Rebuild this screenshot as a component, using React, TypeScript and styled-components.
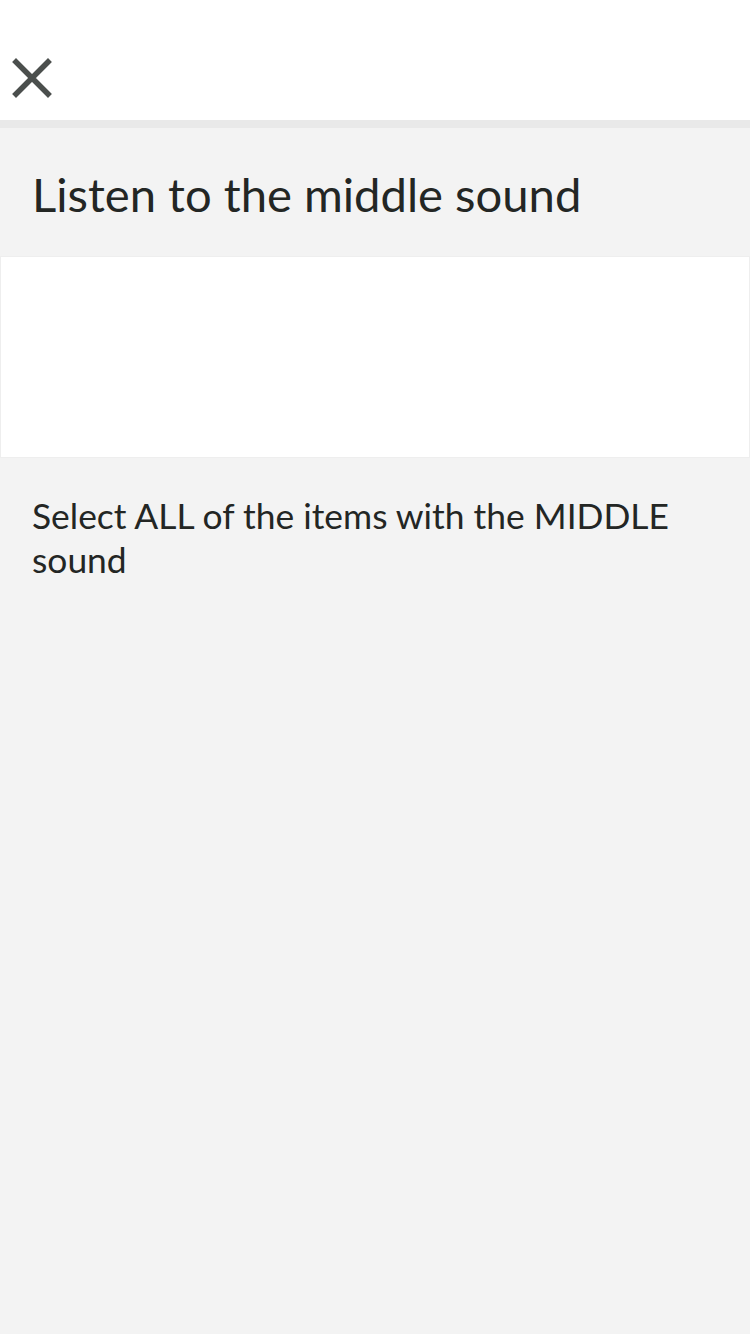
import styled, { createGlobalStyle } from "styled-components";

const GlobalStyle = createGlobalStyle`
  html, body {
    margin: 0;
    padding: 0;
    background: #f3f3f3;
  }
  body {
    font-family: Lato, "Open Sans", sans-serif;
    color: #232624;
  }
`;

const Page = styled.div`
  min-height: 1334px;
  background: #f3f3f3;
  display: flex;
  flex-direction: column;
`;

const Header = styled.header`
  height: 128px;
  box-sizing: border-box;
  background: #ffffff;
  border-bottom: 8px solid #e9e9e9;
  display: flex;
  align-items: flex-end;
  padding: 0 0 22px 12px;
`;

const CloseButton = styled.button`
  width: 40px;
  height: 40px;
  padding: 0;
  border: none;
  background: none;
  display: flex;
  align-items: center;
  justify-content: center;
  cursor: pointer;
`;

const Title = styled.h1`
  margin: 0;
  padding: 37px 32px 34px;
  font-size: 47.2px;
  font-weight: 400;
  line-height: 57px;
  color: #232624;
`;

const MediaBox = styled.div`
  height: 200px;
  background: #ffffff;
  border: 1px solid #eeeeee;
`;

const Prompt = styled.p`
  margin: 36px 0 0;
  padding: 0 32px;
  font-size: 35.4px;
  line-height: 44px;
  color: #232624;
`;

export default function App() {
  return (
    <Page>
      <GlobalStyle />
      <Header>
        <CloseButton aria-label="Close">
          <svg width="40" height="40" viewBox="0 0 40 40">
            <path
              d="M4 4 L36 36 M36 4 L4 36"
              stroke="#4b4f4d"
              strokeWidth="5.5"
              strokeLinecap="square"
              fill="none"
            />
          </svg>
        </CloseButton>
      </Header>
      <Title>Listen to the middle sound</Title>
      <MediaBox />
      <Prompt>Select ALL of the items with the MIDDLE sound</Prompt>
    </Page>
  );
}
